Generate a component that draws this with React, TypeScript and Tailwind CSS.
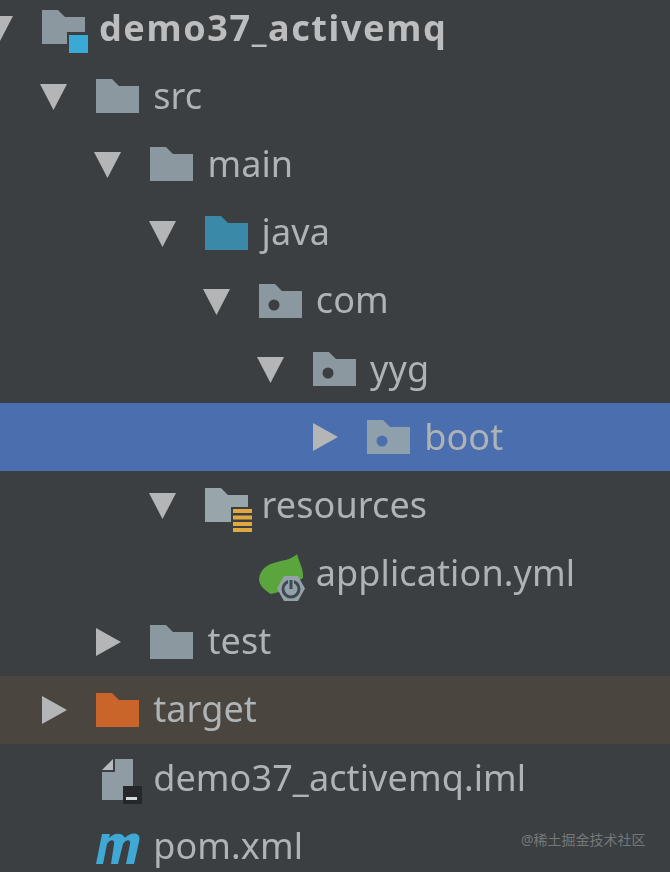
type IconName = "module" | "folder" | "source" | "package" | "resources" | "spring" | "target" | "iml" | "maven";

type Row = {
  label: string;
  depth: number;
  icon: IconName;
  arrow?: "down" | "right";
  tone?: "selected" | "excluded";
  bold?: boolean;
};

const rows: Row[] = [
  { label: "demo37_activemq", depth: 0, icon: "module", arrow: "down", bold: true },
  { label: "src", depth: 1, icon: "folder", arrow: "down" },
  { label: "main", depth: 2, icon: "folder", arrow: "down" },
  { label: "java", depth: 3, icon: "source", arrow: "down" },
  { label: "com", depth: 4, icon: "package", arrow: "down" },
  { label: "yyg", depth: 5, icon: "package", arrow: "down" },
  { label: "boot", depth: 6, icon: "package", arrow: "right", tone: "selected" },
  { label: "resources", depth: 3, icon: "resources", arrow: "down" },
  { label: "application.yml", depth: 4, icon: "spring" },
  { label: "test", depth: 2, icon: "folder", arrow: "right" },
  { label: "target", depth: 1, icon: "target", arrow: "right", tone: "excluded" },
  { label: "demo37_activemq.iml", depth: 1, icon: "iml" },
  { label: "pom.xml", depth: 1, icon: "maven" },
];

const FOLDER = "M0 0H16L23 7H43V34H0Z";

function Arrow({ dir }: { dir: "down" | "right" }) {
  return (
    <svg width="27" height="30" viewBox="0 0 27 30" aria-hidden="true">
      {dir === "down" ? <path d="M0 3H27L13.5 29Z" fill="#b3b5b6" /> : <path d="M2 1L27 15L2 29Z" fill="#b3b5b6" />}
    </svg>
  );
}

function TreeIcon({ name, selected }: { name: IconName; selected: boolean }) {
  const box = "0 0 46 40";
  if (name === "module") {
    return (
      <svg width="46" height="40" viewBox={box} aria-hidden="true" className="overflow-visible">
        <path d={FOLDER} fill="#8b989f" transform="translate(0 2)" />
        <rect x="25" y="24" width="22" height="22" fill="#3c3f41" />
        <rect x="27" y="27" width="19" height="18" fill="#3aa9d6" />
      </svg>
    );
  }
  if (name === "resources") {
    return (
      <svg width="46" height="40" viewBox={box} aria-hidden="true" className="overflow-visible">
        <path d={FOLDER} fill="#98a5ab" transform="translate(0 3)" />
        <rect x="26" y="22" width="23" height="27" fill="#3c3f41" />
        <path d="M28 26H47M28 32.5H47M28 39H47M28 45H47" stroke="#e0a93f" strokeWidth="4" />
      </svg>
    );
  }
  if (name === "spring") {
    return (
      <svg width="46" height="40" viewBox={box} aria-hidden="true" className="overflow-visible">
        <path d="M38 0C40 8 45 16 44 24L20 38L12 40C5 36 0 31 0 25C1 15 9 10 18 8C26 6 33 5 38 0Z" fill="#5aa53c" />
        <path d="M25 22H39L46 34.5L39 47H25L18 34.5Z" fill="#94a1a8" />
        <circle cx="32" cy="35" r="8" fill="none" stroke="#3c4a52" strokeWidth="3" />
        <path d="M32 24V35" stroke="#94a1a8" strokeWidth="6" />
        <path d="M32 26V35" stroke="#3c4a52" strokeWidth="3" />
      </svg>
    );
  }
  if (name === "iml") {
    return (
      <svg width="46" height="40" viewBox={box} aria-hidden="true" className="overflow-visible">
        <path d="M6 12L17 1V12Z" fill="#b4bcc1" />
        <path d="M19 1H37V42H6V14H19Z" fill="#8f9ca3" />
        <rect x="27" y="28" width="19" height="18" fill="#25282a" />
        <rect x="30" y="39" width="11" height="3" fill="#d8d8d8" />
      </svg>
    );
  }
  if (name === "maven") {
    return (
      <svg width="46" height="40" viewBox={box} aria-hidden="true" className="overflow-visible">
        <path
          d="M0 38L6 8H14L13 12C18 7 26 6 29 12C34 6 46 5 43 16L38 38H30L34 18C35 13 30 13 27 18L22 38H15L18 18C19 13 14 13 11 18L7 38Z"
          fill="#3fa8d5"
        />
      </svg>
    );
  }
  const fill = name === "source" ? "#3a89a8" : name === "target" ? "#c9642a" : selected ? "#8fa0ad" : "#8b989f";
  return (
    <svg width="46" height="40" viewBox={box} aria-hidden="true" className="overflow-visible">
      <path d={FOLDER} fill={fill} transform="translate(0 3)" />
      {name === "package" ? <circle cx="15" cy="24" r="5.5" fill={selected ? "#4b6eaf" : "#3c3f41"} /> : null}
    </svg>
  );
}

export default function App() {
  return (
    <div className="relative h-[872px] w-[670px] overflow-hidden bg-[#3c3f41] font-['Noto_Sans','Liberation_Sans',sans-serif]">
      <div className="mt-[-6px] blur-[0.7px]">
        {rows.map((row) => (
          <div
            key={row.label}
            className={`flex h-[68.2px] items-center ${
              row.tone === "selected" ? "bg-[#4b6eaf]" : row.tone === "excluded" ? "bg-[#4a463f]" : ""
            }`}
          >
            <div className="flex items-center" style={{ marginLeft: -15 + row.depth * 54.2 }}>
              <div className="flex w-[57px] shrink-0 items-center pl-[1px]">{row.arrow ? <Arrow dir={row.arrow} /> : null}</div>
              <div className="w-[57px] shrink-0">
                <TreeIcon name={row.icon} selected={row.tone === "selected"} />
              </div>
              <span
                className={`mb-[1px] whitespace-nowrap text-[36px] leading-none ${
                  row.bold ? "font-bold tracking-[1.6px] text-[#bbbdbe]" : "tracking-[0.1px] text-[#aeb3b6]"
                }`}
              >
                {row.label}
              </span>
            </div>
          </div>
        ))}
      </div>
      <span className="absolute left-[521px] top-[831px] font-['Noto_Sans','Noto_Sans_CJK_SC',sans-serif] text-[14px] leading-[18px] text-[#74787a]">
        @稀土掘金技术社区
      </span>
    </div>
  );
}
